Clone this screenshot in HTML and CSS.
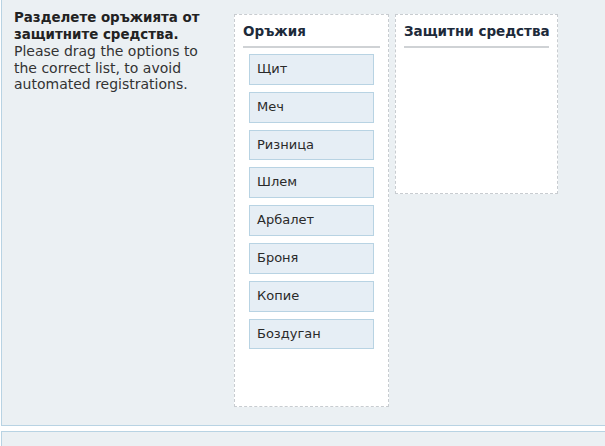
FILE: index.html
```html
<!DOCTYPE html>
<html lang="bg">

<head>
  <meta charset="UTF-8">
  <meta name="viewport" content="width=device-width, initial-scale=1.0">
  <title>Captcha</title>

  <link rel="stylesheet" href="styles.css">
</head>

<body>

  <div class="block">
    <div class="question">
      <strong>Разделете оръжията от защитните средства.</strong>
      Please drag the options to the correct list, to avoid automated registrations.
    </div>

    <div class="lists">
      <div class="list list-weapons">
        <h3>Оръжия</h3>
        <ul>
          <li>Щит</li>
          <li>Меч</li>
          <li>Ризница</li>
          <li>Шлем</li>
          <li>Арбалет</li>
          <li>Броня</li>
          <li>Копие</li>
          <li>Боздуган</li>
        </ul>
      </div>

      <div class="list list-armor">
        <h3>Защитни средства</h3>
        <ul></ul>
      </div>
    </div>
  </div>

  <div class="block block-next"></div>

</body>

</html>
```

FILE: styles.css
```css
body {
  margin: 0;
  padding-left: 1px;
  background: #fff;
  font-family: "DejaVu Sans", Verdana, sans-serif;
  font-size: 13px;
  color: #333;
  overflow: hidden;
}

.block {
  display: flex;
  background: #ebf0f3;
  border: 1px solid #b8d3e3;
  border-top: none;
  border-right: none;
  padding: 10px 0 18px 12px;
}

.block-next {
  margin-top: 5px;
  border-top: 1px solid #b8d3e3;
  height: 20px;
  padding: 0;
}

.question {
  width: 200px;
  margin-right: 20px;
  font-size: 14px;
  line-height: 16.5px;
  color: #333;
}

.question strong {
  display: block;
  font-size: 13.4px;
  color: #222;
}

.lists {
  display: flex;
  align-items: flex-start;
  gap: 6px;
  margin-top: 4px;
}

.list {
  background: #fff;
  border: 1px dashed #c8ccd0;
  padding: 0 8px;
}

.list-weapons {
  width: 137px;
  height: 391px;
}

.list-armor {
  width: 145px;
  height: 178px;
}

.list h3 {
  margin: 0;
  padding: 8px 0 6px;
  font-size: 13.5px;
  line-height: 17px;
  color: #1d2a3a;
  border-bottom: 2px solid #cfd2d5;
  white-space: nowrap;
}

.list ul {
  list-style: none;
  margin: 0;
  padding: 6px 6px 0;
}

.list li {
  background: #e6eef5;
  border: 1px solid #b8d3e3;
  height: 28.8px;
  line-height: 28.8px;
  padding: 0 7px;
  margin-bottom: 7px;
  color: #2a2a2a;
}
```
